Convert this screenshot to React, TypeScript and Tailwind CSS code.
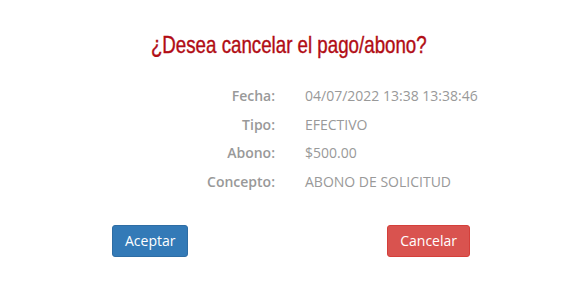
import React from "react";

const rows = [
  { label: "Fecha:", value: "04/07/2022 13:38 13:38:46" },
  { label: "Tipo:", value: "EFECTIVO" },
  { label: "Abono:", value: "$500.00" },
  { label: "Concepto:", value: "ABONO DE SOLICITUD" },
];

export default function App() {
  return (
    <div className="w-[574px] h-[285px] bg-white font-['Open_Sans',sans-serif]">
      {/* condensed heading font isn't available, so squeeze a regular one */}
      <h2 className="pt-[30px] pl-[3px] text-center leading-[30px]">
        <span className="inline-block origin-center scale-x-[0.78] text-[24px] text-[#b10c14] font-['Liberation_Sans',sans-serif] [-webkit-text-stroke:0.4px_#b10c14]">
          ¿Desea cancelar el pago/abono?
        </span>
      </h2>

      <div className="mt-[24px] grid grid-cols-[275px_1fr] gap-x-[30px] gap-y-[8.5px] text-[14px] leading-[20px] text-[#999]">
        {rows.map((r) => (
          <React.Fragment key={r.label}>
            <div className="text-right font-semibold">{r.label}</div>
            <div>{r.value}</div>
          </React.Fragment>
        ))}
      </div>

      <div className="mt-[33px] flex justify-between pl-[112px] pr-[104px]">
        <button className="h-[32px] px-[12px] rounded-[3px] bg-[#337ab7] border border-[#2e6da4] text-white text-[14px]">
          Aceptar
        </button>
        <button className="h-[32px] px-[12px] rounded-[3px] bg-[#d9534f] border border-[#d43f3a] text-white text-[14px]">
          Cancelar
        </button>
      </div>
    </div>
  );
}
